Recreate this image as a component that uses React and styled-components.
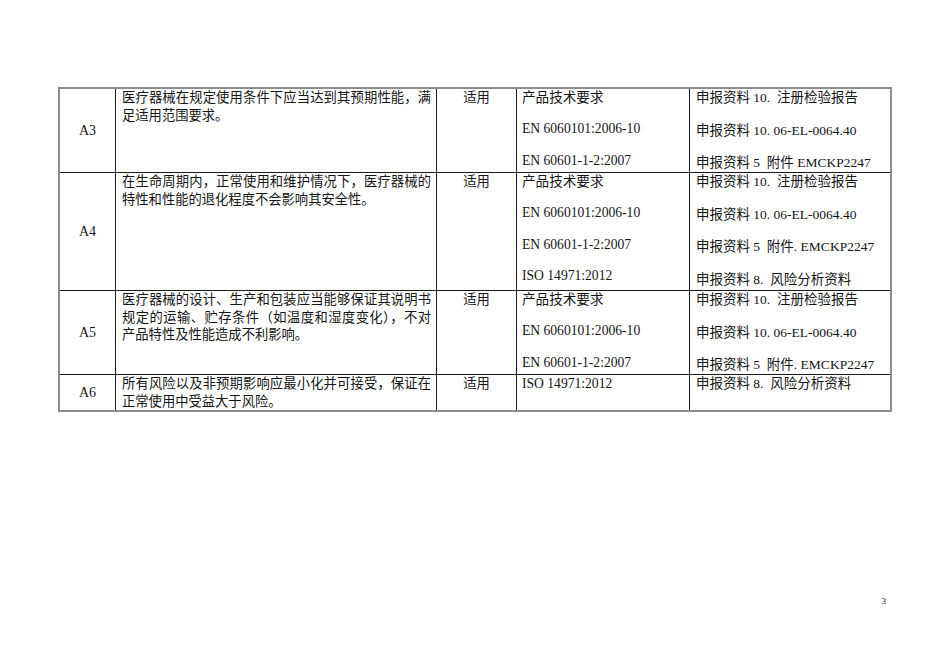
import React from "react";
import styled, { createGlobalStyle } from "styled-components";

const Global = createGlobalStyle`
  html, body { margin: 0; padding: 0; background: #fff; }
  body { font-family: "Liberation Serif", "Noto Sans CJK SC", serif; color: #141414; }
`;

const Page = styled.div`
  width: 950px;
  height: 672px;
  box-sizing: border-box;
  padding: 87px 0 0 58px;
  display: flex;
  flex-direction: column;
`;

const Table = styled.div`
  width: 834px;
  box-sizing: border-box;
  border: 2px solid #8c8c8c;
  display: grid;
  grid-template-columns: 56px 321px 80px 173px 200px;
  grid-template-rows: 84px 118px 84px 35px;
  font-size: 13.3px;
`;

const Cell = styled.div`
  box-sizing: border-box;
  border-right: ${(p) => (p.$last ? "none" : "1px solid #1a1a1a")};
  border-bottom: ${(p) => (p.$bottom ? "none" : "1px solid #1a1a1a")};
  padding: ${(p) => p.$pad || "0 6px 0 6px"};
  line-height: 17.5px;
  overflow: hidden;
`;

const LabelCell = styled(Cell)`
  display: flex;
  align-items: center;
  justify-content: center;
  padding: 0;
  font-size: 14px;
`;

const TextCell = styled(Cell)`
  text-align: justify;
  padding: 0 5px 0 6px;
`;

const CenterCell = styled(Cell)`
  text-align: center;
  padding: 0;
`;

const ListCell = styled(Cell)`
  display: flex;
  flex-direction: column;
  gap: ${(p) => p.$gap}px;
  white-space: pre;
  font-size: ${(p) => p.$size}px;
`;

const Line = styled.div`
  line-height: 17.5px;
`;

const Footer = styled.div`
  width: 828px;
  margin-top: 185px;
  text-align: right;
  font-size: 9px;
  line-height: 9px;
`;

const rows = [
  {
    id: "A3",
    text: "医疗器械在规定使用条件下应当达到其预期性能，满足适用范围要求。",
    std: ["产品技术要求", "EN 6060101:2006-10", "EN 60601-1-2:2007"],
    docs: ["申报资料 10.  注册检验报告", "申报资料 10. 06-EL-0064.40", "申报资料 5  附件 EMCKP2247"],
  },
  {
    id: "A4",
    text: "在生命周期内，正常使用和维护情况下，医疗器械的特性和性能的退化程度不会影响其安全性。",
    std: ["产品技术要求", "EN 6060101:2006-10", "EN 60601-1-2:2007", "ISO 14971:2012"],
    docs: [
      "申报资料 10.  注册检验报告",
      "申报资料 10. 06-EL-0064.40",
      "申报资料 5  附件. EMCKP2247",
      "申报资料 8.  风险分析资料",
    ],
  },
  {
    id: "A5",
    text: "医疗器械的设计、生产和包装应当能够保证其说明书规定的运输、贮存条件（如温度和湿度变化），不对产品特性及性能造成不利影响。",
    std: ["产品技术要求", "EN 6060101:2006-10", "EN 60601-1-2:2007"],
    docs: ["申报资料 10.  注册检验报告", "申报资料 10. 06-EL-0064.40", "申报资料 5  附件. EMCKP2247"],
  },
  {
    id: "A6",
    text: "所有风险以及非预期影响应最小化并可接受，保证在正常使用中受益大于风险。",
    std: ["ISO 14971:2012"],
    docs: ["申报资料 8.  风险分析资料"],
  },
];

export default function App() {
  return (
    <>
      <Global />
      <Page>
        <Table>
          {rows.map((r, i) => {
            const bottom = i === rows.length - 1;
            return (
              <React.Fragment key={r.id}>
                <LabelCell $bottom={bottom}>{r.id}</LabelCell>
                <TextCell $bottom={bottom}>{r.text}</TextCell>
                <CenterCell $bottom={bottom}>适用</CenterCell>
                <ListCell $bottom={bottom} $gap={13.8} $size={13.6} $pad="0 4px 0 5px">
                  {r.std.map((s) => (
                    <Line key={s}>{s}</Line>
                  ))}
                </ListCell>
                <ListCell $bottom={bottom} $last $gap={15} $size={13.5} $pad="0 4px 0 6px">
                  {r.docs.map((d) => (
                    <Line key={d}>{d}</Line>
                  ))}
                </ListCell>
              </React.Fragment>
            );
          })}
        </Table>
        <Footer>3</Footer>
      </Page>
    </>
  );
}
